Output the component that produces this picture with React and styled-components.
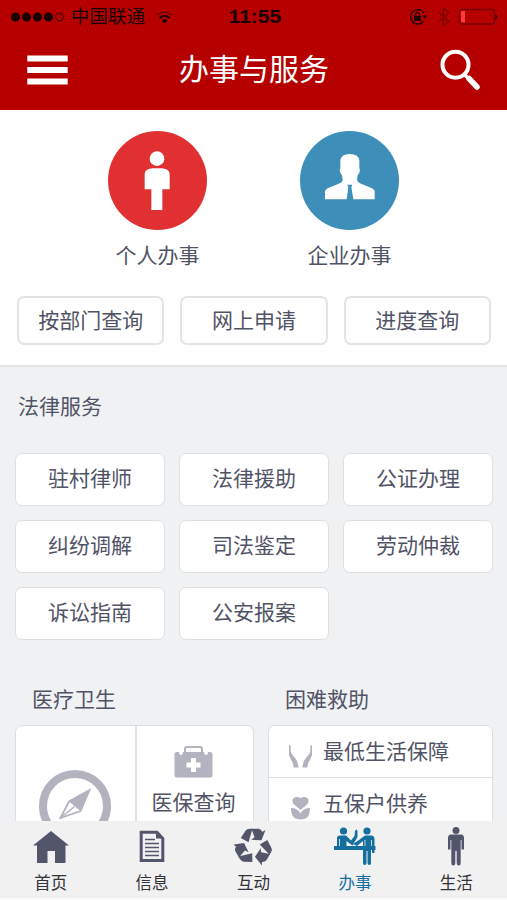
import React from "react";
import styled, { createGlobalStyle } from "styled-components";

const GlobalStyle = createGlobalStyle`
  * { box-sizing: border-box; }
  body { margin: 0; background: #fff; }
`;

const Phone = styled.div`
  display: flex;
  flex-direction: column;
  width: 507px;
  height: 900px;
  overflow: hidden;
  background: #f0f1f3;
  color: #505366;
  font-family: "Liberation Sans", "Noto Sans CJK SC", sans-serif;
  font-size: 21px;
  line-height: 30px;
  white-space: nowrap;
`;

const Header = styled.header`
  flex: none;
  height: 110px;
  background: #b60000;
`;

const StatusBar = styled.div`
  display: grid;
  grid-template-columns: 1fr auto 1fr;
  align-items: center;
  height: 34px;
  padding: 0 9px 0 11px;
  color: #180000;
`;

const StatusGroup = styled.div`
  display: flex;
  align-items: center;
  justify-content: ${(p) => (p.$end ? "flex-end" : "flex-start")};
`;

const Carrier = styled.span`
  margin: 0 11px 0 7px;
  font-size: 18.5px;
  line-height: 24px;
`;

const Clock = styled.span`
  font-size: 17.5px;
  font-weight: 700;
  line-height: 24px;
  transform: scaleX(1.2);
`;

const TitleBar = styled.div`
  display: flex;
  align-items: center;
  justify-content: space-between;
  height: 72px;
  padding: 0 26px 0 27px;
`;

const Title = styled.h1`
  margin: 0;
  color: #fff;
  font-size: 30px;
  font-weight: 400;
  line-height: 40px;
`;

const Content = styled.main`
  flex: 1;
  min-height: 0;
  overflow: hidden;
`;

const Hero = styled.section`
  height: 257px;
  padding-top: 21px;
  background: #fff;
  border-bottom: 2px solid #e4e4e5;
`;

const Categories = styled.div`
  display: flex;
  justify-content: center;
  gap: 93px;
`;

const Category = styled.div`
  display: flex;
  flex-direction: column;
  align-items: center;
  gap: 11px;
`;

const Disc = styled.div`
  width: 99px;
  height: 99px;
  border-radius: 50%;
  background: ${(p) => p.$color};
`;

const QueryRow = styled.div`
  display: grid;
  grid-template-columns: repeat(3, 1fr);
  gap: 16px;
  padding: 0 16px 0 17px;
  margin-top: 25px;
`;

const ServiceGrid = styled.div`
  display: grid;
  grid-template-columns: repeat(3, 1fr);
  gap: 14px;
  padding: 0 14px 0 15px;
  margin-top: 31px;
`;

const Tile = styled.button`
  height: ${(p) => (p.$compact ? 49 : 53)}px;
  padding: ${(p) => (p.$compact ? "1px 0 0" : "0 0 1px")};
  border: ${(p) => (p.$compact ? "2px solid #e4e4e6" : "1px solid #dedfe1")};
  border-radius: 7px;
  background: #fff;
  color: inherit;
  font: inherit;
`;

const SectionTitle = styled.h2`
  margin: ${(p) => p.$margin};
  font-size: inherit;
  font-weight: 400;
  line-height: 30px;
`;

const Panels = styled.div`
  display: grid;
  grid-template-columns: 239px 225px;
  gap: 14px;
  padding: 0 15px;
  margin-top: 45px;
`;

const Card = styled.div`
  display: grid;
  grid-template-columns: ${(p) => p.$columns || "1fr"};
  margin-top: 10px;
  height: 160px;
  border: 1px solid #dcdde0;
  border-radius: 7px 7px 0 0;
  background: #fff;
`;

const CardCell = styled.div`
  display: flex;
  flex-direction: column;
  align-items: center;
  padding: ${(p) => p.$top}px 1px 0 0;
  & + & { border-left: 2px solid #e2e2e5; padding-right: 3px; }
`;

const AidRow = styled.div`
  display: flex;
  align-items: center;
  height: 51px;
  padding-left: 19px;
  gap: 10px;
  & + & { border-top: 1px solid #dcdde0; height: 52px; }
  svg { margin-top: 8px; }
`;

const TabBar = styled.nav`
  flex: none;
  display: grid;
  grid-template-columns: repeat(5, 1fr);
  height: 79px;
  background: #f1f1f2;
  border-bottom: 2px solid #fafafa;
`;

const Tab = styled.div`
  display: flex;
  flex-direction: column;
  align-items: center;
  gap: 5px;
  padding-top: 5px;
  color: ${(p) => (p.$active ? "#146f9f" : "#333338")};
  font-size: 16.5px;
  line-height: 24px;
  svg { color: ${(p) => (p.$active ? "#146f9f" : "#53566b")}; }
`;

const SignalIcon = () => (
  <svg width="53" height="12" viewBox="0 0 53 12" fill="currentColor">
    {[4.5, 15.5, 26.5, 37.5].map((x) => <circle key={x} cx={x} cy="6" r="4.5" />)}
    <circle cx="48.5" cy="6" r="4" fill="none" stroke="currentColor" strokeWidth="0.8" />
  </svg>
);

const WifiIcon = () => (
  <svg width="17" height="13" viewBox="0 0 17 13" fill="none" stroke="currentColor">
    <path d="M1 4Q8.500 -2 16 4" strokeWidth="1.200" opacity=".5" />
    <path d="M3.500 7Q8.500 2.500 13.500 7" strokeWidth="2" />
    <path d="M5.500 9.300Q8.500 7 11.500 9.300L8.500 12.500Z" fill="currentColor" stroke="none" />
  </svg>
);

const StatusIcons = () => (
  <svg width="90" height="22" viewBox="0 0 90 22" fill="none" stroke="currentColor">
    <path d="M15.500 15.500A7.300 7.300 0 1 1 16 7" strokeWidth="1.200" />
    <path d="M14.500 9.500H19L17 13Z" fill="currentColor" stroke="none" />
    <rect x="6" y="10" width="7" height="5" fill="currentColor" stroke="none" />
    <path d="M7.500 10V8.500a2 2 0 0 1 4 0V10" strokeWidth="1.200" />
    <path d="M30.500 6L41 15.500L35.500 20V2L41 6.500L30.500 16" stroke="#780000" strokeWidth="1.200" />
    <rect x="51.500" y="3.500" width="35" height="14.500" rx="3" stroke="#780000" strokeWidth="1.300" />
    <rect x="53" y="5" width="4" height="11.500" fill="#ff3936" stroke="none" />
    <path d="M87.500 8Q91 11 87.500 14Z" fill="currentColor" stroke="none" />
  </svg>
);

const MenuIcon = () => (
  <svg width="41" height="30" viewBox="0 0 41 30" fill="#fff">
    <path d="M.3.500H40.700V6.500H.3zM.3 12H40.700V18H.3zM.3 23.500H40.700V29.500H.3z" />
  </svg>
);

const SearchIcon = () => (
  <svg width="41" height="42" viewBox="0 0 41 42" fill="none" stroke="#fff">
    <circle cx="15.500" cy="15.700" r="13" strokeWidth="4" />
    <path d="M25 26L29 30" strokeWidth="3.500" />
    <path d="M29 29.500L37 38" strokeWidth="5.500" strokeLinecap="round" />
  </svg>
);

const PersonIcon = () => (
  <svg width="99" height="99" viewBox="0 0 297 297" fill="#fff">
    <circle cx="147" cy="83" r="22" />
    <path d="M110 175V128Q112 113 135 112H160Q183 113 185 128V175H163V237H130V175Z" />
  </svg>
);

const BusinessIcon = () => (
  <svg width="99" height="99" viewBox="0 0 297 297" fill="#fff">
    <path d="M75 205V181Q76 176 83 172L116 158Q128 153 128 147L126 133Q120 128 119 116L121 112V87Q124 69 149 69Q175 69 178 87V112L180 116Q179 128 173 133L171 147Q172 153 183 158L216 172Q224 176 224 181V205H160L154 169L157 161H142L145 169L140 205Z" />
  </svg>
);

const CompassIcon = () => (
  <svg width="74" height="74" viewBox="0 0 74 74" fill="none" stroke="#b2b3bf">
    <circle cx="37" cy="37" r="32" strokeWidth="8" />
    <path d="M51.500 21L31 32.500L42.500 42Z" fill="#b2b3bf" stroke="none" />
    <path d="M51.500 21L31 32.500L22.500 49L42.500 42Z" strokeWidth="1.800" />
    <path d="M36.500 37.500L22.500 49" strokeWidth="1.500" />
  </svg>
);

const MedicalIcon = () => (
  <svg width="39" height="32" viewBox="0 0 39 32" fill="#b2b3bf">
    <path d="M3 6H5Q5 9 7 9T9 6H30Q30 9 32 9T34 6H36Q38.500 6 38.500 8V29Q38.500 31.500 36 31.500H3Q.5 31.500.5 29V8Q.5 6 3 6Z" />
    <path d="M11 7V3Q11 1 13 1H26Q28 1 28 3V7" fill="none" stroke="#b2b3bf" strokeWidth="2" />
    <path d="M17 12H22V16.500H26.500V21.500H22V26H17V21.500H12.500V16.500H17Z" fill="#fff" />
  </svg>
);

const HandsIcon = () => (
  <svg width="25" height="24" viewBox="0 0 25 24" fill="#b2b3bf">
    <path d="M1 1.500Q2 .5 2.500 2L3 9L7 14Q10 17 10.500 23.500H5.500Q5.500 19 3 16L1 11Z" />
    <path d="M24 1.500Q23 .5 22.500 2L22 9L18 14Q15 17 14.500 23.500H19.500Q19.500 19 22 16L24 11Z" />
  </svg>
);

const FlowerIcon = () => (
  <svg width="25" height="24" viewBox="0 0 25 24" fill="#b2b3bf">
    <path d="M12.500 14L5.500 8C2 2.500 8-1 12.500 2C17-1 23 2.500 19.500 8Z" />
    <path d="M3 12Q10 12 12.500 17.500Q15 12 22 12Q22 23.500 12.500 23.500Q3 23.500 3 12Z" />
  </svg>
);

const HomeIcon = () => (
  <svg width="38" height="40" viewBox="0 0 38 40" fill="currentColor">
    <path d="M19 5L37 19.500H33.500V37H23V25H15.500V37H5V19.500H1Z" />
  </svg>
);

const DocumentIcon = () => (
  <svg width="26" height="40" viewBox="0 0 26 40" fill="none" stroke="currentColor">
    <path d="M2.200 6.300H18L23.800 12.500V34.500H2.200Z" strokeWidth="3" />
    <path d="M17 5V12.500H25Z" fill="currentColor" stroke="none" />
    <path d="M6 13.500H16M6 17.500H20M6 21.500H20M6 25.500H20M6 29.500H20" strokeWidth="1.300" />
  </svg>
);

const RecycleIcon = () => (
  <svg width="38" height="40" viewBox="0 0 38 40" fill="currentColor">
    <g transform="translate(19.500 20.700) scale(.3333)">
      {[0, 120, 240].map((angle) => (
        <g key={angle} transform={`rotate(${angle})`}>
          <path d="M-38 -26L-24 -48Q-20 -54 -11 -54H-3L-15 -13Z" />
          <path d="M-6 -54H16Q22 -53 27 -45L36 -50L24 -19L-7 -21L3 -28Z" />
        </g>
      ))}
    </g>
  </svg>
);

const ServiceIcon = () => (
  <svg width="42" height="40" viewBox="0 0 42 40" fill="currentColor">
    <circle cx="9.500" cy="5" r="3.600" />
    <circle cx="33" cy="5" r="3.600" />
    <path d="M0 20H41.500V24H0Z" />
    <path d="M3 20V12Q3 9.500 6 9.500H12L17 14.500L20.500 10L21 5Q22.500 2 23.500 5V11L18.500 19.500L12.500 15V20Z" />
    <path d="M25 14L31 9.500H37Q40.500 9.500 40.500 13V27H38V24H37V37Q37 39 35.300 39T33.500 37V25H32.500V37Q32.500 39 30.700 39T29 37V15L23 20L19 18Z" />
    <path d="M5.500 13V20M31 14V20M37.500 14V20" stroke="#f1f1f2" strokeWidth=".8" />
  </svg>
);

const LifeIcon = () => (
  <svg width="18" height="40" viewBox="0 0 18 40" fill="currentColor">
    <circle cx="9" cy="4.500" r="3.500" />
    <path d="M4 8.500H14Q17 8.500 17 12V23.500H14.500V14H13.700V37Q13.700 39.500 11.800 39.500T9.700 37V25H8.300V37Q8.300 39.500 6.300 39.500T4.300 37V14H3.500V23.500H1V12Q1 8.500 4 8.500Z" />
  </svg>
);

const queries = ["按部门查询", "网上申请", "进度查询"];

const legalServices = [
  "驻村律师", "法律援助", "公证办理",
  "纠纷调解", "司法鉴定", "劳动仲裁",
  "诉讼指南", "公安报案",
];

const tabs = [
  { label: "首页", Icon: HomeIcon },
  { label: "信息", Icon: DocumentIcon },
  { label: "互动", Icon: RecycleIcon },
  { label: "办事", Icon: ServiceIcon, active: true },
  { label: "生活", Icon: LifeIcon },
];

export default function App() {
  return (
    <Phone>
      <GlobalStyle />
      <Header>
        <StatusBar>
          <StatusGroup>
            <SignalIcon />
            <Carrier>中国联通</Carrier>
            <WifiIcon />
          </StatusGroup>
          <Clock>11:55</Clock>
          <StatusGroup $end><StatusIcons /></StatusGroup>
        </StatusBar>
        <TitleBar>
          <MenuIcon />
          <Title>办事与服务</Title>
          <SearchIcon />
        </TitleBar>
      </Header>
      <Content>
        <Hero>
          <Categories>
            <Category>
              <Disc $color="#e03031"><PersonIcon /></Disc>
              个人办事
            </Category>
            <Category>
              <Disc $color="#3d8fb9"><BusinessIcon /></Disc>
              企业办事
            </Category>
          </Categories>
          <QueryRow>
            {queries.map((label) => <Tile key={label} $compact>{label}</Tile>)}
          </QueryRow>
        </Hero>
        <SectionTitle $margin="25px 0 0 18px">法律服务</SectionTitle>
        <ServiceGrid>
          {legalServices.map((label) => <Tile key={label}>{label}</Tile>)}
        </ServiceGrid>
        <Panels>
          <section>
            <SectionTitle $margin="0 0 0 17px">医疗卫生</SectionTitle>
            <Card $columns="119px 1fr">
              <CardCell $top={43}><CompassIcon /></CardCell>
              <CardCell $top={20}>
                <MedicalIcon />
                <SectionTitle as="span" $margin="10px 0 0">医保查询</SectionTitle>
              </CardCell>
            </Card>
          </section>
          <section>
            <SectionTitle $margin="0 0 0 17px">困难救助</SectionTitle>
            <Card>
              <div>
                <AidRow><HandsIcon />最低生活保障</AidRow>
                <AidRow><FlowerIcon />五保户供养</AidRow>
              </div>
            </Card>
          </section>
        </Panels>
      </Content>
      <TabBar>
        {tabs.map(({ label, Icon, active }) => (
          <Tab key={label} $active={active}>
            <Icon />
            {label}
          </Tab>
        ))}
      </TabBar>
    </Phone>
  );
}
